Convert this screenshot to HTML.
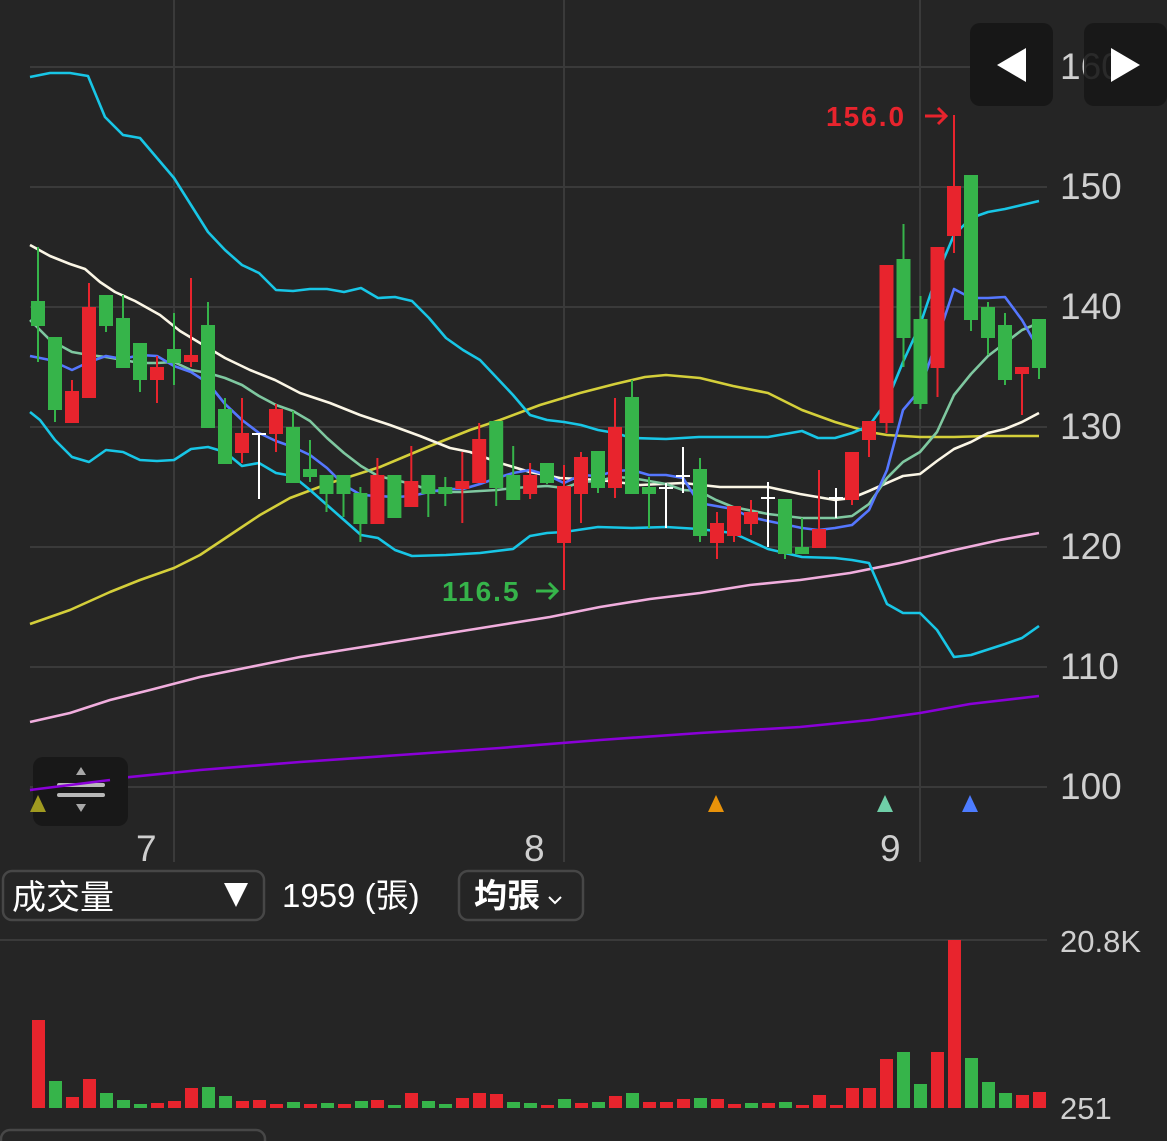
<!DOCTYPE html>
<html><head><meta charset="utf-8"><style>
html,body{margin:0;padding:0;background:#252525;width:1167px;height:1141px;overflow:hidden}
svg{display:block}
.t{font-family:"Liberation Sans","Noto Sans CJK TC",sans-serif}
</style></head><body>
<svg width="1167" height="1141" viewBox="0 0 1167 1141" xmlns="http://www.w3.org/2000/svg">
<rect width="1167" height="1141" fill="#252525"/>
<g stroke="#3a3a3a" stroke-width="2">
<line x1="30" y1="67" x2="1047" y2="67"/><line x1="30" y1="187" x2="1047" y2="187"/><line x1="30" y1="307" x2="1047" y2="307"/><line x1="30" y1="427" x2="1047" y2="427"/><line x1="30" y1="547" x2="1047" y2="547"/><line x1="30" y1="667" x2="1047" y2="667"/><line x1="30" y1="787" x2="1047" y2="787"/>
<line x1="174" y1="0" x2="174" y2="862"/><line x1="564" y1="0" x2="564" y2="862"/><line x1="920" y1="0" x2="920" y2="862"/>
<line x1="0" y1="940" x2="1047" y2="940"/>
</g>
<g fill="none" stroke-width="2.6" stroke-linejoin="round">
<polyline stroke="#8a00d8" points="30,790 100,780 200,770 300,762 400,755 500,748 600,740 700,733 800,727 870,720 920,713 970,704 1039,696"/>
<polyline stroke="#f1aede" points="30,722 70,713 110,700 150,690 200,677 250,667 300,657 350,649 400,641 450,633 500,625 550,617 600,607 650,599 700,593 750,585 800,580 850,573 900,563 950,551 1000,540 1039,533"/>
<polyline stroke="#d4cf3a" points="30,624 70,610 110,592 140,580 174,568 200,555 230,535 260,515 290,498 330,483 380,467 430,446 470,430 500,420 540,405 580,393 615,384 645,377 666,375 700,378 733,386 768,393 802,410 835,422 869,432 887,435 920,437 954,437 988,436 1039,436"/>
<polyline stroke="#18c6e6" points="30,77 50,73 70,73 88,76 105,117 123,135 140,138 157,158 174,178 191,205 208,232 225,250 242,265 259,273 276,290 293,291 310,289 327,289 344,292 361,288 378,298 395,297 412,301 429,318 446,338 463,350 480,360 497,378 513,395 530,415 547,420 564,422 581,425 598,430 615,433 632,438 666,439 699,437 733,437 768,437 802,431 818,438 835,438 852,433 869,426 887,401 903,362 920,325 937,275 954,235 971,218 988,212 1005,209 1022,205 1039,201"/>
<polyline stroke="#18c6e6" points="30,412 40,420 55,440 72,457 89,462 106,450 123,452 140,460 157,461 174,460 191,449 208,447 225,452 242,466 259,463 276,473 293,476 310,490 327,505 344,520 361,535 378,538 395,550 412,556 446,555 480,553 513,549 530,536 547,533 564,532 598,527 632,528 666,527 699,529 733,533 768,549 785,553 802,557 835,558 852,560 869,563 887,604 903,613 920,613 937,630 954,657 971,655 1005,644 1022,638 1039,626"/>
<polyline stroke="#fbf6e6" points="30,245 50,256 70,264 85,269 100,282 115,292 135,301 160,315 180,331 200,343 225,358 250,370 275,380 300,393 330,403 360,415 390,425 420,436 450,448 470,452 500,463 530,472 560,478 600,480 640,485 683,483 720,487 768,487 800,494 835,500 852,498 869,491 887,483 903,476 920,474 937,461 954,449 971,442 988,433 1005,429 1022,422 1039,413"/>
<polyline stroke="#7fc8a0" points="30,320 50,340 72,352 89,355 106,357 123,360 140,363 157,363 174,362 191,370 208,373 225,378 242,385 259,396 276,405 293,411 310,421 327,438 344,453 361,466 378,476 395,480 412,484 429,490 446,492 463,492 480,491 497,490 513,488 530,487 547,486 564,488 581,482 598,481 615,477 632,478 649,481 666,484 683,490 699,491 716,500 733,507 768,514 802,518 835,518 852,516 869,504 887,478 903,462 920,452 937,432 954,395 971,374 988,356 1005,343 1022,330 1039,323"/>
<polyline stroke="#5577ff" points="30,356 50,360 72,370 89,362 106,356 123,359 140,355 157,356 174,366 191,372 208,383 225,404 242,420 259,433 276,441 293,447 310,455 327,468 344,485 361,495 378,496 395,497 412,496 429,492 446,489 463,489 480,484 497,478 513,473 530,470 547,475 564,483 581,475 598,476 615,471 632,470 649,475 666,475 683,478 699,503 716,506 733,509 750,517 768,521 802,528 818,530 835,528 852,525 869,510 887,470 903,410 920,390 937,340 954,289 971,298 988,298 1005,297 1022,320 1039,350"/>
</g>
<g fill="#36b44a" stroke="#36b44a" stroke-width="2">
<line x1="38" y1="247" x2="38" y2="362"/><rect x="32" y="302" width="12" height="23"/>
<line x1="55" y1="338" x2="55" y2="422"/><rect x="49" y="338" width="12" height="71"/>
<line x1="106" y1="296" x2="106" y2="332"/><rect x="100" y="296" width="12" height="29"/>
<line x1="123" y1="295" x2="123" y2="367"/><rect x="117" y="319" width="12" height="48"/>
<line x1="140" y1="344" x2="140" y2="392"/><rect x="134" y="344" width="12" height="35"/>
<line x1="174" y1="313" x2="174" y2="385"/><rect x="168" y="350" width="12" height="12"/>
<line x1="208" y1="302" x2="208" y2="427"/><rect x="202" y="326" width="12" height="101"/>
<line x1="225" y1="398" x2="225" y2="463"/><rect x="219" y="410" width="12" height="53"/>
<line x1="293" y1="411" x2="293" y2="482"/><rect x="287" y="428" width="12" height="54"/>
<line x1="310" y1="440" x2="310" y2="482"/><rect x="304" y="470" width="12" height="6"/>
<line x1="326.5" y1="476" x2="326.5" y2="512"/><rect x="320.5" y="476" width="12" height="17"/>
<line x1="343.5" y1="476" x2="343.5" y2="517"/><rect x="337.5" y="476" width="12" height="17"/>
<line x1="360.4" y1="487" x2="360.4" y2="542"/><rect x="354.4" y="494" width="12" height="29"/>
<line x1="394.4" y1="476" x2="394.4" y2="517"/><rect x="388.4" y="476" width="12" height="41"/>
<line x1="428.3" y1="476" x2="428.3" y2="517"/><rect x="422.3" y="476" width="12" height="17"/>
<line x1="445.3" y1="477" x2="445.3" y2="506"/><rect x="439.3" y="488" width="12" height="5"/>
<line x1="496.2" y1="422" x2="496.2" y2="506"/><rect x="490.2" y="422" width="12" height="65"/>
<line x1="513.2" y1="446" x2="513.2" y2="499"/><rect x="507.2" y="476" width="12" height="23"/>
<line x1="547" y1="464" x2="547" y2="484"/><rect x="541" y="464" width="12" height="18"/>
<line x1="598" y1="452" x2="598" y2="493"/><rect x="592" y="452" width="12" height="35"/>
<line x1="632" y1="380" x2="632" y2="493"/><rect x="626" y="398" width="12" height="95"/>
<line x1="649" y1="477" x2="649" y2="528"/><rect x="643" y="488" width="12" height="5"/>
<line x1="700" y1="458" x2="700" y2="542"/><rect x="694" y="470" width="12" height="65"/>
<line x1="785" y1="500" x2="785" y2="559"/><rect x="779" y="500" width="12" height="53"/>
<line x1="802" y1="518" x2="802" y2="553"/><rect x="796" y="548" width="12" height="5"/>
<line x1="903.5" y1="224" x2="903.5" y2="367"/><rect x="897.5" y="260" width="12" height="77"/>
<line x1="920.5" y1="296" x2="920.5" y2="409"/><rect x="914.5" y="320" width="12" height="83"/>
<line x1="971" y1="176" x2="971" y2="331"/><rect x="965" y="176" width="12" height="143"/>
<line x1="988" y1="302" x2="988" y2="355"/><rect x="982" y="308" width="12" height="29"/>
<line x1="1005" y1="313" x2="1005" y2="385"/><rect x="999" y="326" width="12" height="53"/>
<line x1="1039" y1="320" x2="1039" y2="379"/><rect x="1033" y="320" width="12" height="47"/>
</g>
<g fill="#e8242d" stroke="#e8242d" stroke-width="2">
<line x1="72" y1="380" x2="72" y2="422"/><rect x="66" y="392" width="12" height="30"/>
<line x1="89" y1="283" x2="89" y2="397"/><rect x="83" y="308" width="12" height="89"/>
<line x1="157" y1="356" x2="157" y2="403"/><rect x="151" y="368" width="12" height="11"/>
<line x1="191" y1="278" x2="191" y2="367"/><rect x="185" y="356" width="12" height="5"/>
<line x1="242" y1="398" x2="242" y2="463"/><rect x="236" y="434" width="12" height="18"/>
<line x1="276" y1="404" x2="276" y2="452"/><rect x="270" y="410" width="12" height="23"/>
<line x1="377.4" y1="458" x2="377.4" y2="523"/><rect x="371.4" y="476" width="12" height="47"/>
<line x1="411.3" y1="446" x2="411.3" y2="506"/><rect x="405.3" y="482" width="12" height="24"/>
<line x1="462.3" y1="452" x2="462.3" y2="523"/><rect x="456.3" y="482" width="12" height="6"/>
<line x1="479.2" y1="423" x2="479.2" y2="482"/><rect x="473.2" y="440" width="12" height="42"/>
<line x1="530.1" y1="463" x2="530.1" y2="499"/><rect x="524.1" y="476" width="12" height="17"/>
<line x1="564" y1="465" x2="564" y2="590"/><rect x="558" y="487" width="12" height="55"/>
<line x1="581" y1="452" x2="581" y2="523"/><rect x="575" y="458" width="12" height="35"/>
<line x1="615" y1="398" x2="615" y2="498"/><rect x="609" y="428" width="12" height="59"/>
<line x1="717" y1="512" x2="717" y2="559"/><rect x="711" y="524" width="12" height="18"/>
<line x1="734" y1="507" x2="734" y2="542"/><rect x="728" y="507" width="12" height="28"/>
<line x1="751" y1="500" x2="751" y2="535"/><rect x="745" y="513" width="12" height="10"/>
<line x1="819" y1="470" x2="819" y2="547"/><rect x="813" y="530" width="12" height="17"/>
<line x1="852" y1="453" x2="852" y2="505"/><rect x="846" y="453" width="12" height="46"/>
<line x1="869" y1="422" x2="869" y2="457"/><rect x="863" y="422" width="12" height="17"/>
<line x1="886.5" y1="266" x2="886.5" y2="433"/><rect x="880.5" y="266" width="12" height="156"/>
<line x1="937.5" y1="248" x2="937.5" y2="397"/><rect x="931.5" y="248" width="12" height="119"/>
<line x1="954" y1="115" x2="954" y2="253"/><rect x="948" y="187" width="12" height="48"/>
<line x1="1022" y1="368" x2="1022" y2="415"/><rect x="1016" y="368" width="12" height="5"/>
</g>
<g stroke="#ffffff" stroke-width="2">
<line x1="259" y1="433" x2="259" y2="499"/><line x1="252" y1="434" x2="266" y2="434"/>
<line x1="666" y1="483" x2="666" y2="528"/><line x1="659" y1="488" x2="673" y2="488"/>
<line x1="683" y1="447" x2="683" y2="493"/><line x1="676" y1="476" x2="690" y2="476"/>
<line x1="768" y1="482" x2="768" y2="547"/><line x1="761" y1="498" x2="775" y2="498"/>
<line x1="836" y1="488" x2="836" y2="518"/><line x1="829" y1="498" x2="843" y2="498"/>
</g>
<text class="t" x="826" y="126" fill="#e8242d" font-size="28" font-weight="bold" letter-spacing="2">156.0</text>
<path d="M925 116 H946 M938 108 L946 116 L938 124" fill="none" stroke="#e8242d" stroke-width="3"/>
<text class="t" x="442" y="601" fill="#36b44a" font-size="28" font-weight="bold" letter-spacing="2">116.5</text>
<path d="M536 591 H557 M549 583 L557 591 L549 599" fill="none" stroke="#36b44a" stroke-width="3"/>
<g class="t" fill="#cfcfcf" font-size="37">
<text x="1060" y="79">160</text><text x="1060" y="199">150</text><text x="1060" y="319">140</text><text x="1060" y="439">130</text><text x="1060" y="559">120</text><text x="1060" y="679">110</text><text x="1060" y="799">100</text>
<text x="136" y="861">7</text><text x="524" y="861">8</text><text x="880" y="861">9</text>
<text x="1060" y="952" font-size="31">20.8K</text><text x="1060" y="1119" font-size="31">251</text>
</g>
<rect x="970" y="23" width="83" height="83" rx="10" fill="#171717"/>
<rect x="1084" y="23" width="83" height="83" rx="10" fill="#171717" fill-opacity="0.9"/>
<polygon points="997,65 1026,48 1026,82" fill="#fff"/>
<polygon points="1140,65 1111,48 1111,82" fill="#fff"/>
<rect x="33" y="757" width="95" height="69" rx="10" fill="#181818"/>
<polygon points="81,767 76,775 86,775" fill="#a8a8a8"/>
<polygon points="81,812 76,804 86,804" fill="#a8a8a8"/>
<rect x="57" y="783" width="48" height="4" rx="2" fill="#b8b8b8"/>
<rect x="57" y="793" width="48" height="4" rx="2" fill="#b8b8b8"/>
<line x1="30" y1="790" x2="110" y2="780" stroke="#8a00d8" stroke-width="2.6"/>
<polygon points="38,795 30,812 46,812" fill="#a09a20"/>
<polygon points="716,795 708,812 724,812" fill="#e8920a"/>
<polygon points="885,795 877,812 893,812" fill="#6fcfa8"/>
<polygon points="970,795 962,812 978,812" fill="#4d7cff"/>
<rect x="3" y="871" width="261" height="49" rx="9" fill="none" stroke="#474747" stroke-width="2.5"/>
<text class="t" x="12" y="909" fill="#fff" font-size="34">成交量</text>
<polygon points="224,883 248,883 236,907" fill="#fff"/>
<text class="t" x="282" y="907" fill="#fff" font-size="33">1959 (張)</text>
<rect x="459" y="871" width="124" height="49" rx="9" fill="none" stroke="#474747" stroke-width="2.5"/>
<text class="t" x="474" y="907" fill="#fff" font-size="33" font-weight="bold">均張</text>
<polyline points="549,897 555,903 561,897" fill="none" stroke="#fff" stroke-width="2"/>
<rect x="1" y="1130" width="264" height="30" rx="9" fill="none" stroke="#474747" stroke-width="2.5"/>
<g fill="#e8242d">
<rect x="32" y="1020" width="13" height="88"/><rect x="66" y="1097" width="13" height="11"/><rect x="83" y="1079" width="13" height="29"/><rect x="151" y="1103" width="13" height="5"/><rect x="168" y="1101" width="13" height="7"/><rect x="185" y="1088" width="13" height="20"/><rect x="236" y="1101" width="13" height="7"/><rect x="253" y="1100" width="13" height="8"/><rect x="270" y="1104" width="13" height="4"/><rect x="304" y="1104" width="13" height="4"/><rect x="338" y="1104" width="13" height="4"/><rect x="371" y="1100" width="13" height="8"/><rect x="405" y="1093" width="13" height="15"/><rect x="456" y="1098" width="13" height="10"/><rect x="473" y="1093" width="13" height="15"/><rect x="490" y="1094" width="13" height="14"/><rect x="541" y="1105" width="13" height="3"/><rect x="575" y="1103" width="13" height="5"/><rect x="609" y="1096" width="13" height="12"/><rect x="643" y="1102" width="13" height="6"/><rect x="660" y="1102" width="13" height="6"/><rect x="677" y="1099" width="13" height="9"/><rect x="711" y="1099" width="13" height="9"/><rect x="728" y="1104" width="13" height="4"/><rect x="762" y="1103" width="13" height="5"/><rect x="796" y="1105" width="13" height="3"/><rect x="813" y="1095" width="13" height="13"/><rect x="830" y="1105" width="13" height="3"/><rect x="846" y="1088" width="13" height="20"/><rect x="863" y="1088" width="13" height="20"/><rect x="880" y="1059" width="13" height="49"/><rect x="931" y="1052" width="13" height="56"/><rect x="948" y="940" width="13" height="168"/><rect x="1016" y="1095" width="13" height="13"/><rect x="1033" y="1092" width="13" height="16"/>
</g>
<g fill="#36b44a">
<rect x="49" y="1081" width="13" height="27"/><rect x="100" y="1093" width="13" height="15"/><rect x="117" y="1100" width="13" height="8"/><rect x="134" y="1104" width="13" height="4"/><rect x="202" y="1087" width="13" height="21"/><rect x="219" y="1096" width="13" height="12"/><rect x="287" y="1102" width="13" height="6"/><rect x="321" y="1103" width="13" height="5"/><rect x="355" y="1101" width="13" height="7"/><rect x="388" y="1105" width="13" height="3"/><rect x="422" y="1101" width="13" height="7"/><rect x="439" y="1104" width="13" height="4"/><rect x="507" y="1102" width="13" height="6"/><rect x="524" y="1103" width="13" height="5"/><rect x="558" y="1099" width="13" height="9"/><rect x="592" y="1102" width="13" height="6"/><rect x="626" y="1093" width="13" height="15"/><rect x="694" y="1098" width="13" height="10"/><rect x="745" y="1103" width="13" height="5"/><rect x="779" y="1102" width="13" height="6"/><rect x="897" y="1052" width="13" height="56"/><rect x="914" y="1084" width="13" height="24"/><rect x="965" y="1058" width="13" height="50"/><rect x="982" y="1082" width="13" height="26"/><rect x="999" y="1093" width="13" height="15"/>
</g>
</svg>
</body></html>
